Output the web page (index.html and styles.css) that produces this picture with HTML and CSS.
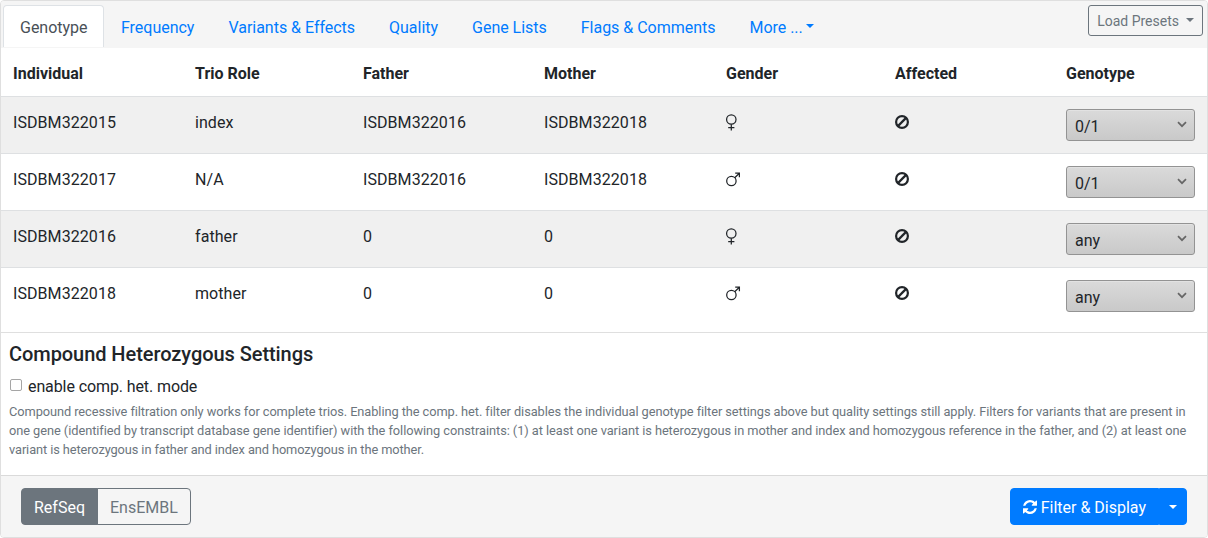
FILE: index.html
```html
<!DOCTYPE html>
<html lang="en">
<head>
<meta charset="utf-8">
<title>Variant Filter</title>
<link rel="stylesheet" href="styles.css">
</head>
<body>
<svg class="defs" aria-hidden="true">
  <symbol id="female" viewBox="0 0 15 17"><g fill="none" stroke="currentColor" stroke-width="1.25"><circle cx="5.3" cy="5.5" r="4.7"/><path d="M5.3 10.2v6.3M2.2 13.5h6.2"/></g></symbol>
  <symbol id="male" viewBox="0 0 15 17"><g fill="none" stroke="currentColor" stroke-width="1.25"><circle cx="5.4" cy="10" r="4.7"/><path d="M8.7 6.7l4.4-4.2M9.2 2.2h4.2v4"/></g></symbol>
  <symbol id="ban" viewBox="0 0 14 14"><g fill="none" stroke="currentColor" stroke-width="2.2"><circle cx="7" cy="7" r="5.9"/><path d="M2.9 11.1l8.2-8.2"/></g></symbol>
  <symbol id="chevron" viewBox="0 0 10 7"><path d="M1 1.2l4 4 4-4" fill="none" stroke="#666" stroke-width="1.7"/></symbol>
</svg>
<div class="card">
  <header class="card-header">
    <nav class="tabs">
      <a class="tab active">Genotype</a><a class="tab">Frequency</a><a class="tab">Variants &amp; Effects</a><a class="tab">Quality</a><a class="tab">Gene Lists</a><a class="tab">Flags &amp; Comments</a><a class="tab caret">More ...</a>
    </nav>
    <button class="btn-presets caret">Load Presets</button>
  </header>
  <div class="table">
    <div class="row head"><span>Individual</span><span>Trio Role</span><span>Father</span><span>Mother</span><span>Gender</span><span>Affected</span><span>Genotype</span></div>
    <div class="row odd"><span>ISDBM322015</span><span>index</span><span>ISDBM322016</span><span>ISDBM322018</span><span><svg class="gender"><use href="#female"/></svg></span><span><svg class="ban"><use href="#ban"/></svg></span><div class="select">0/1<svg class="chevron"><use href="#chevron"/></svg></div></div>
    <div class="row"><span>ISDBM322017</span><span>N/A</span><span>ISDBM322016</span><span>ISDBM322018</span><span><svg class="gender"><use href="#male"/></svg></span><span><svg class="ban"><use href="#ban"/></svg></span><div class="select">0/1<svg class="chevron"><use href="#chevron"/></svg></div></div>
    <div class="row odd"><span>ISDBM322016</span><span>father</span><span>0</span><span>0</span><span><svg class="gender"><use href="#female"/></svg></span><span><svg class="ban"><use href="#ban"/></svg></span><div class="select">any<svg class="chevron"><use href="#chevron"/></svg></div></div>
    <div class="row"><span>ISDBM322018</span><span>mother</span><span>0</span><span>0</span><span><svg class="gender"><use href="#male"/></svg></span><span><svg class="ban"><use href="#ban"/></svg></span><div class="select">any<svg class="chevron"><use href="#chevron"/></svg></div></div>
  </div>
  <section class="settings">
    <h5>Compound Heterozygous Settings</h5>
    <label class="check"><span class="box"></span><span class="check-text">enable comp. het. mode</span></label>
    <p>Compound recessive filtration only works for complete trios. Enabling the comp. het. filter disables the individual genotype filter settings above but quality settings still apply. Filters for variants that are present in<br><span class="loose">one gene (identified by transcript database gene identifier) with the following constraints: (1) at least one variant is heterozygous in mother and index and homozygous reference in the father, and (2) at least one</span><br><span class="tight">variant is heterozygous in father and index and homozygous in the mother.</span></p>
  </section>
  <footer class="card-footer">
    <div class="group"><button class="btn db selected">RefSeq</button><button class="btn db">EnsEMBL</button></div>
    <div class="group"><button class="btn primary"><svg class="refresh" viewBox="128 128 1536 1536"><path fill="currentColor" d="M1639 1056q0 5-1 7-64 268-268 434.500t-478 166.500q-146 0-282.500-55t-243.500-157l-129 129q-19 19-45 19t-45-19-19-45v-448q0-26 19-45t45-19h448q26 0 45 19t19 45-19 45l-137 137q71 66 161 102t187 36q134 0 250-65t186-179q11-17 53-117 8-23 30-23h192q13 0 22.500 9.500t9.500 22.500zm25-800v448q0 26-19 45t-45 19h-448q-26 0-45-19t-19-45 19-45l138-138q-148-137-349-137-134 0-250 65t-186 179q-11 17-53 117-8 23-30 23h-199q-13 0-22.500-9.500t-9.500-22.500v-7q65-268 270-434.500t480-166.500q146 0 284 55.500t245 156.500l130-129q19-19 45-19t45 19 19 45z"/></svg>Filter &amp; Display</button><button class="btn primary split caret" aria-label="More actions"></button></div>
  </footer>
</div>
</body>
</html>
```

FILE: styles.css
```css
* { box-sizing: border-box; }
body { margin: 0; background: #fff; color: #212529; font: 16px/24px Roboto, sans-serif; }
button { font: inherit; margin: 0; white-space: nowrap; }
.defs { display: none; }
.card { height: 538px; display: flex; flex-direction: column; border: 1px solid #dfdfdf; border-radius: 4px; overflow: hidden; background: #fff; }
.card-header { display: flex; justify-content: space-between; align-items: flex-start; height: 47px; padding: 4px 4px 0 2px; background: #f5f5f5; }
.tabs { display: flex; letter-spacing: -0.02px; }
.tab { height: 42px; padding: 10px 16px 6px; border: 1px solid transparent; border-bottom: 0; color: #007bff; white-space: nowrap; }
.tab.active { width: 101px; color: #495057; background: #fff; border-color: #dee2e6; border-radius: 4px 4px 0 0; }
.caret::after { content: ""; display: inline-block; margin-left: 4px; vertical-align: 4px; border-top: 4.8px solid; border-left: 4.8px solid transparent; border-right: 4.8px solid transparent; }
.tab.caret::after { margin-left: 3px; vertical-align: 5px; }
.btn-presets { height: 31px; padding: 5px 8px 3px; border: 1px solid #6c757d; border-radius: 3px; background: transparent; color: #6c757d; font-size: 14px; line-height: 21px; }
.btn-presets.caret::after { border-width: 4.2px 4.2px 0; margin-left: 7px; vertical-align: 3.6px; }
.table { padding-bottom: 8px; }
.row { display: grid; grid-template-columns: 182px 168px 181px 182px 169px 171px 153px; height: 57px; padding-top: 12px; border-top: 1px solid #dee0e2; }
.row > * { margin: 0 12px; }
.row > span { padding-top: 2px; letter-spacing: 0.07px; }
.row.head { height: 48px; border-top: 0; font-weight: 700; }
.row.head > span { letter-spacing: 0; }
.row.odd { background: #f0f0f0; }
.gender { display: block; width: 15px; height: 17px; margin-top: 3px; }
.ban { display: block; width: 14px; height: 14px; margin-top: 4px; }
.select { display: flex; justify-content: space-between; height: 32px; padding: 5px 7px 0 8px; border: 1px solid #939393; border-radius: 3px; background: linear-gradient(#dadada, #c9c9c9); box-shadow: inset 0 1px #e2e2e2; }
.chevron { width: 10px; height: 7px; margin-top: 6px; }
.settings { height: 143px; padding: 9px 8px 0; border-top: 1px solid #dfdfdf; }
h5 { margin: 0 0 8px; font-size: 20px; line-height: 24px; font-weight: 500; letter-spacing: -0.06px; }
.check { display: flex; }
.check-text { height: 24px; padding-top: 1px; letter-spacing: -0.1px; }
.box { width: 12px; height: 12px; margin: 5px 6px 0 1px; border: 1px solid #a5a5a5; border-radius: 2px; background: #fff; }
.settings p { margin: 4px 0 0; color: #6c757d; font-size: 12.8px; line-height: 19px; letter-spacing: -0.071px; white-space: nowrap; }
.loose { letter-spacing: -0.051px; }
.tight { letter-spacing: -0.095px; }
.card-footer { display: flex; justify-content: space-between; height: 62px; padding: 12px 20px 0; border-top: 1px solid #dadada; background: #f5f5f5; }
.group { display: flex; }
.btn { height: 37px; padding: 7px 12px 5px; border: 1px solid #6c757d; border-radius: 4px; line-height: 24px; }
.db { color: #6c757d; background: transparent; }
.db:first-child, .primary:first-child { border-radius: 4px 0 0 4px; }
.db:last-child { margin-left: -1px; border-radius: 0 4px 4px 0; }
.db.selected { color: #fff; background: #6c757d; }
.primary { border-color: #007bff; background: #007bff; color: #fff; }
.split { margin-left: 0; padding: 7px 9px 5px; border-radius: 0 4px 4px 0; }
.split.caret::after { margin-left: 0; border-width: 4.8px 4.8px 0; }
.refresh { width: 14px; height: 14px; margin-right: 4px; vertical-align: -1px; }
```
